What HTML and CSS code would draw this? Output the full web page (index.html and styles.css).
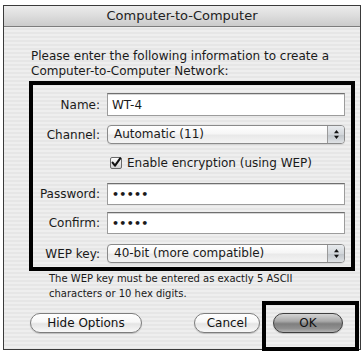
FILE: index.html
```html
<!DOCTYPE html>
<html>
<head>
<meta charset="utf-8">
<link rel="stylesheet" href="styles.css">
</head>
<body>
<div class="window">
  <div class="titlebar">Computer-to-Computer</div>
  <div class="content">
    <p class="intro">Please enter the following information to create a<br>Computer-to-Computer Network:</p>
    <div class="form">
      <div class="row r-name">
        <span class="label">Name:</span>
        <div class="field">WT-4</div>
      </div>
      <div class="row r-channel">
        <span class="label">Channel:</span>
        <div class="popup"><span class="popup-text">Automatic (11)</span><span class="stepper"><svg width="7" height="11" viewBox="0 0 7 11"><path d="M3.5 1 L6 4.2 L1 4.2 Z M3.5 10 L6 6.8 L1 6.8 Z" fill="#111"/></svg></span></div>
      </div>
      <div class="row r-check">
        <span class="label"></span>
        <div class="checkline">
          <svg class="checkbox" width="12" height="12" viewBox="0 0 12 12"><defs><linearGradient id="cb" x1="0" y1="0" x2="0" y2="1"><stop offset="0" stop-color="#ffffff"/><stop offset="1" stop-color="#cfcfcf"/></linearGradient></defs><rect x="0.5" y="0.5" width="11" height="11" rx="1.5" fill="url(#cb)" stroke="#6a6a6a"/><path d="M2.6 5.6 L5 8.6 L10.2 1.4" fill="none" stroke="#111" stroke-width="2.1" stroke-linecap="round" stroke-linejoin="round"/></svg>
          <span>Enable encryption (using WEP)</span>
        </div>
      </div>
      <div class="row r-pass">
        <span class="label">Password:</span>
        <div class="field secure">•••••</div>
      </div>
      <div class="row r-confirm">
        <span class="label">Confirm:</span>
        <div class="field secure">•••••</div>
      </div>
      <div class="row r-wep">
        <span class="label">WEP key:</span>
        <div class="popup"><span class="popup-text">40-bit (more compatible)</span><span class="stepper"><svg width="7" height="11" viewBox="0 0 7 11"><path d="M3.5 1 L6 4.2 L1 4.2 Z M3.5 10 L6 6.8 L1 6.8 Z" fill="#111"/></svg></span></div>
      </div>
    </div>
    <p class="note">The WEP key must be entered as exactly 5 ASCII<br>characters or 10 hex digits.</p>
    <div class="buttons">
      <button class="btn btn-hide">Hide Options</button>
      <button class="btn btn-cancel">Cancel</button>
      <button class="btn btn-ok">OK</button>
    </div>
  </div>
  <div class="ok-mark"></div>
</div>
</body>
</html>
```
FILE: styles.css
```css
html, body {
  margin: 0;
  padding: 0;
  background: #ffffff;
}
body {
  width: 364px;
  height: 354px;
  overflow: hidden;
  font-family: "DejaVu Sans", "Noto Sans", sans-serif;
  font-size: 12px;
  color: #1a1a1a;
}
.window {
  position: relative;
  box-sizing: border-box;
  margin: 5px 0 0 3px;
  width: 358px;
  height: 345px;
  border: 1px solid #3a3a3a;
  background: repeating-linear-gradient(to bottom, #eeeeee 0, #eeeeee 2px, #e6e6e6 2px, #e6e6e6 4px);
}
.titlebar {
  height: 20px;
  line-height: 20px;
  border-bottom: 1px solid #7c7c7c;
  background: linear-gradient(to bottom, #ececec 0%, #dcdcdc 50%, #cbcbcb 100%);
  text-align: center;
  font-size: 13px;
  color: #222;
}
.content {
  padding: 0 0 0 0;
}
.intro {
  margin: 22px 0 0 27px;
  line-height: 15px;
}
.form {
  box-sizing: border-box;
  margin: 2px 0 0 25px;
  width: 326px;
  border: 4px solid #000;
  padding: 8px 6px 4px 0;
  display: flex;
  flex-direction: column;
}
.row {
  display: grid;
  grid-template-columns: 67px 238px;
  column-gap: 7px;
  align-items: center;
}
.label {
  text-align: right;
}
.r-name { height: 23px; }
.r-channel { height: 19px; margin-top: 9px; }
.r-check { height: 16px; margin-top: 11px; }
.r-pass { height: 22px; margin-top: 12px; }
.r-confirm { height: 22px; margin-top: 7px; }
.r-wep { height: 19px; margin-top: 10px; }
.field {
  box-sizing: border-box;
  height: 100%;
  background: #fff;
  border: 1px solid #9c9c9c;
  border-top-color: #6f6f6f;
  box-shadow: inset 0 1px 0 #d6d6d6;
  padding: 0 0 0 4px;
  display: flex;
  align-items: center;
}
.secure {
  font-size: 11px;
  letter-spacing: 0.3px;
  font-weight: bold;
}
.popup {
  box-sizing: border-box;
  height: 19px;
  border: 1px solid #8a8a8a;
  border-radius: 4px;
  background: linear-gradient(to bottom, #ffffff 0%, #f6f6f6 45%, #e9e9e9 55%, #f4f4f4 100%);
  display: flex;
  align-items: stretch;
  box-shadow: 0 1px 0 rgba(0,0,0,0.08);
}
.popup-text {
  flex: 1;
  padding-left: 6px;
  line-height: 17px;
}
.stepper {
  width: 16px;
  border-left: 1px solid #9a9a9a;
  border-radius: 0 3px 3px 0;
  background: linear-gradient(to bottom, #e8ebee 0%, #d2d6da 50%, #bfc4c9 52%, #dfe2e5 100%);
  display: flex;
  align-items: center;
  justify-content: center;
}
.checkline {
  display: flex;
  align-items: center;
  gap: 5px;
  padding-left: 3px;
}
.checkbox {
  display: block;
}
.note {
  margin: 0 0 0 45px;
  font-size: 10px;
  line-height: 15px;
}
.buttons {
  display: flex;
  align-items: center;
  margin-top: 12px;
  padding-left: 26px;
}
.btn {
  box-sizing: border-box;
  height: 20px;
  padding: 0;
  font-family: "DejaVu Sans", "Noto Sans", sans-serif;
  font-size: 12px;
  color: #111;
  border: 1px solid #7d7d7d;
  border-radius: 10px;
  background: linear-gradient(to bottom, #ffffff 0%, #f7f7f7 45%, #e4e4e4 55%, #f8f8f8 100%);
  box-shadow: 0 1px 1px rgba(0,0,0,0.18);
}
.btn-hide { width: 112px; }
.btn-cancel { width: 66px; margin-left: 52px; }
.btn-ok {
  width: 70px;
  margin-left: 13px;
  border-color: #3f3f3f;
  background: linear-gradient(to bottom, #d4d4d4 0%, #a9a9a9 40%, #7f7f7f 55%, #8f8f8f 80%, #b4b4b4 100%);
}
.ok-mark {
  position: absolute;
  left: 258px;
  top: 295px;
  width: 97px;
  height: 50px;
  box-sizing: border-box;
  border: 4px solid #000;
}
```
